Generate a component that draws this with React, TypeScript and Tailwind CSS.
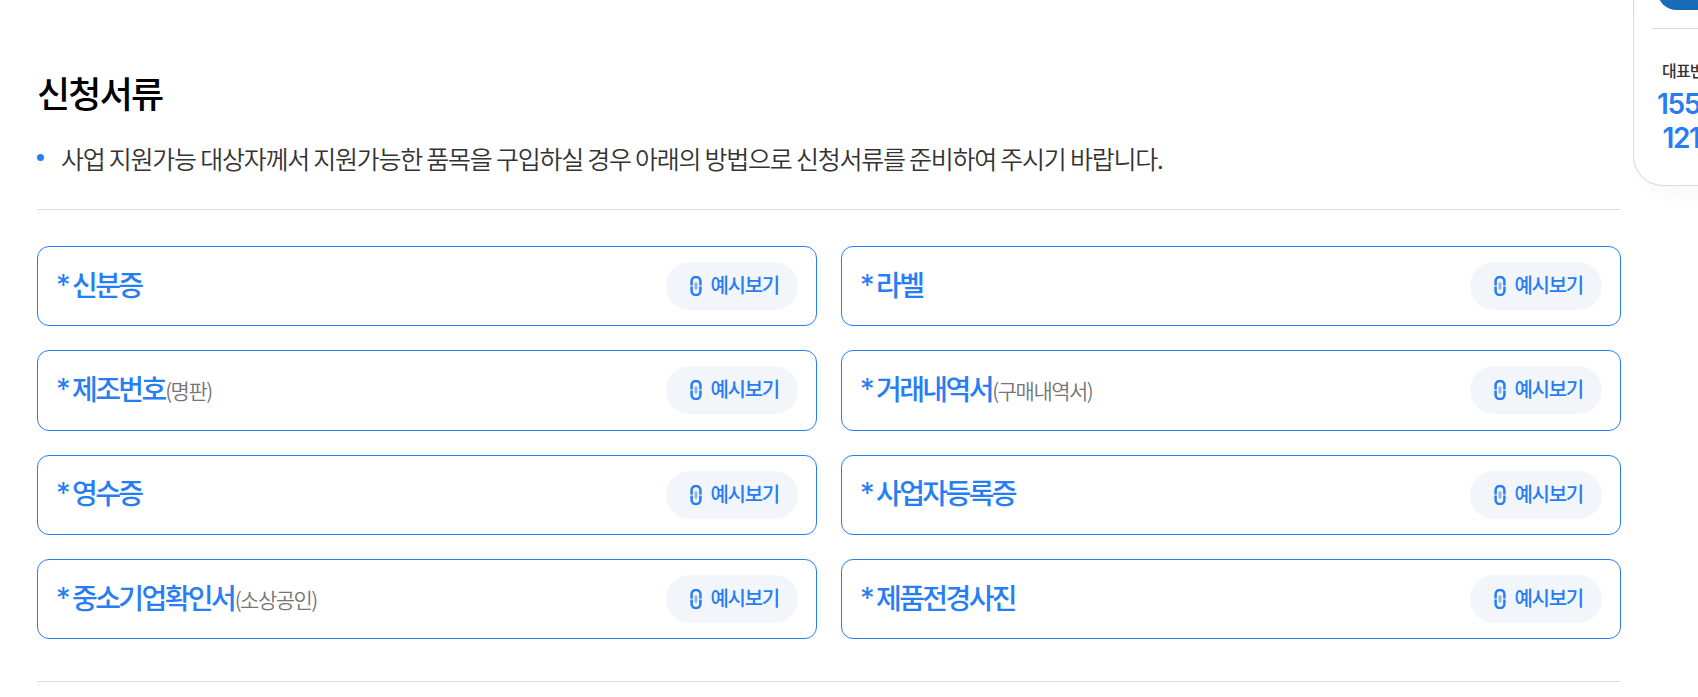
interface DocItem {
  name: string;
  note?: string;
}

const DOCS: DocItem[] = [
  { name: '신분증' },
  { name: '라벨' },
  { name: '제조번호', note: '(명판)' },
  { name: '거래내역서', note: '(구매내역서)' },
  { name: '영수증' },
  { name: '사업자등록증' },
  { name: '중소기업확인서', note: '(소상공인)' },
  { name: '제품전경사진' },
];

function ClipIcon() {
  return (
    <svg width="12" height="20" viewBox="0 0 12 20" fill="none" stroke="#267df4" strokeWidth="2.5" className="shrink-0">
      <path d="M1.6 9.5V5.3a4.4 4.4 0 0 1 8.8 0V9.5" />
      <path d="M1.6 10.5v4.2a4.4 4.4 0 0 0 8.8 0V10.5" />
      <path d="M6 6.5v7" strokeWidth="2.8" strokeOpacity="0.55" />
    </svg>
  );
}

function DocCard({ name, note }: DocItem) {
  return (
    <li className="flex h-[80.33px] items-center justify-between rounded-[12px] border border-[#267df4] bg-white px-[18px]">
      <p className="flex items-baseline whitespace-nowrap pb-[5px] text-[28px] leading-[40px] font-medium text-[#267df4]">
        <span className="relative -top-px mr-[2px] w-[14px] font-[Inter] text-[29px] leading-none font-normal">*</span>
        <span className="tracking-[-2.6px]">{name}</span>
        {note && <span className="relative -top-px ml-[0.5px] text-[21px] leading-none font-[350] tracking-[-1.5px] text-[#757575]">{note}</span>}
      </p>
      <button className="flex h-12 w-[132px] shrink-0 items-center rounded-full bg-[#f2f5fa] pl-[23.5px] text-[20px] leading-none font-medium tracking-[-1.3px] whitespace-nowrap text-[#267df4]">
        <ClipIcon />
        <span className="ml-[9px] pb-[2px]">예시보기</span>
      </button>
    </li>
  );
}

function QuickPanel() {
  return (
    <aside className="ml-3 h-[186px] w-[180px] shrink-0 overflow-hidden rounded-bl-[30px] border border-t-0 border-[#d9d9d9] bg-white pl-[18px] shadow-[8px_8px_16px_rgba(0,0,0,0.03)]">
      <div className="-mt-[30px] ml-[5px] h-10 rounded-bl-[20px] bg-gradient-to-b from-[#1f7fc8] to-[#1768b4]" />
      <div className="mt-[18px] h-px bg-[#d9d9d9]" />
      <p className="mt-[31px] ml-[10px] text-[16px] leading-[20px] font-medium tracking-[-0.8px] whitespace-nowrap text-[#333]">대표번호</p>
      <p className="mt-[7px] ml-[5px] font-[Inter] text-[28px] leading-[34px] font-semibold tracking-[-1.4px] whitespace-nowrap text-[#267df4]">1551-</p>
      <p className="ml-[10.5px] font-[Inter] text-[28px] leading-[34px] font-semibold tracking-[-1.4px] whitespace-nowrap text-[#267df4]">1213</p>
    </aside>
  );
}

export default function App() {
  return (
    <div className="flex h-[697px] w-full items-start overflow-hidden bg-white pl-[37px] font-['Noto_Sans_CJK_KR',sans-serif]">
      <main className="w-[1584px] shrink-0 pt-[65px]">
        <h2 className="text-[36px] leading-[54px] font-medium tracking-[-1.8px] text-black">신청서류</h2>
        <div className="mt-[22px] flex h-9 items-center">
          <span className="mr-[17px] mb-[3px] size-[7px] rounded-full bg-[#267df4]" />
          <p className="pb-[3px] text-[25px] leading-9 font-[350] tracking-[-1.25px] whitespace-nowrap text-[#333]">
            사업 지원가능 대상자께서 지원가능한 품목을 구입하실 경우 아래의 방법으로 신청서류를 준비하여 주시기 바랍니다.
          </p>
        </div>
        <div className="mt-8 h-px bg-[#ddd]" />
        <ul className="mt-9 grid grid-cols-2 gap-6">
          {DOCS.map((doc) => (
            <DocCard key={doc.name} {...doc} />
          ))}
        </ul>
        <div className="mt-[42px] h-px bg-[#ddd]" />
      </main>
      <QuickPanel />
    </div>
  );
}
